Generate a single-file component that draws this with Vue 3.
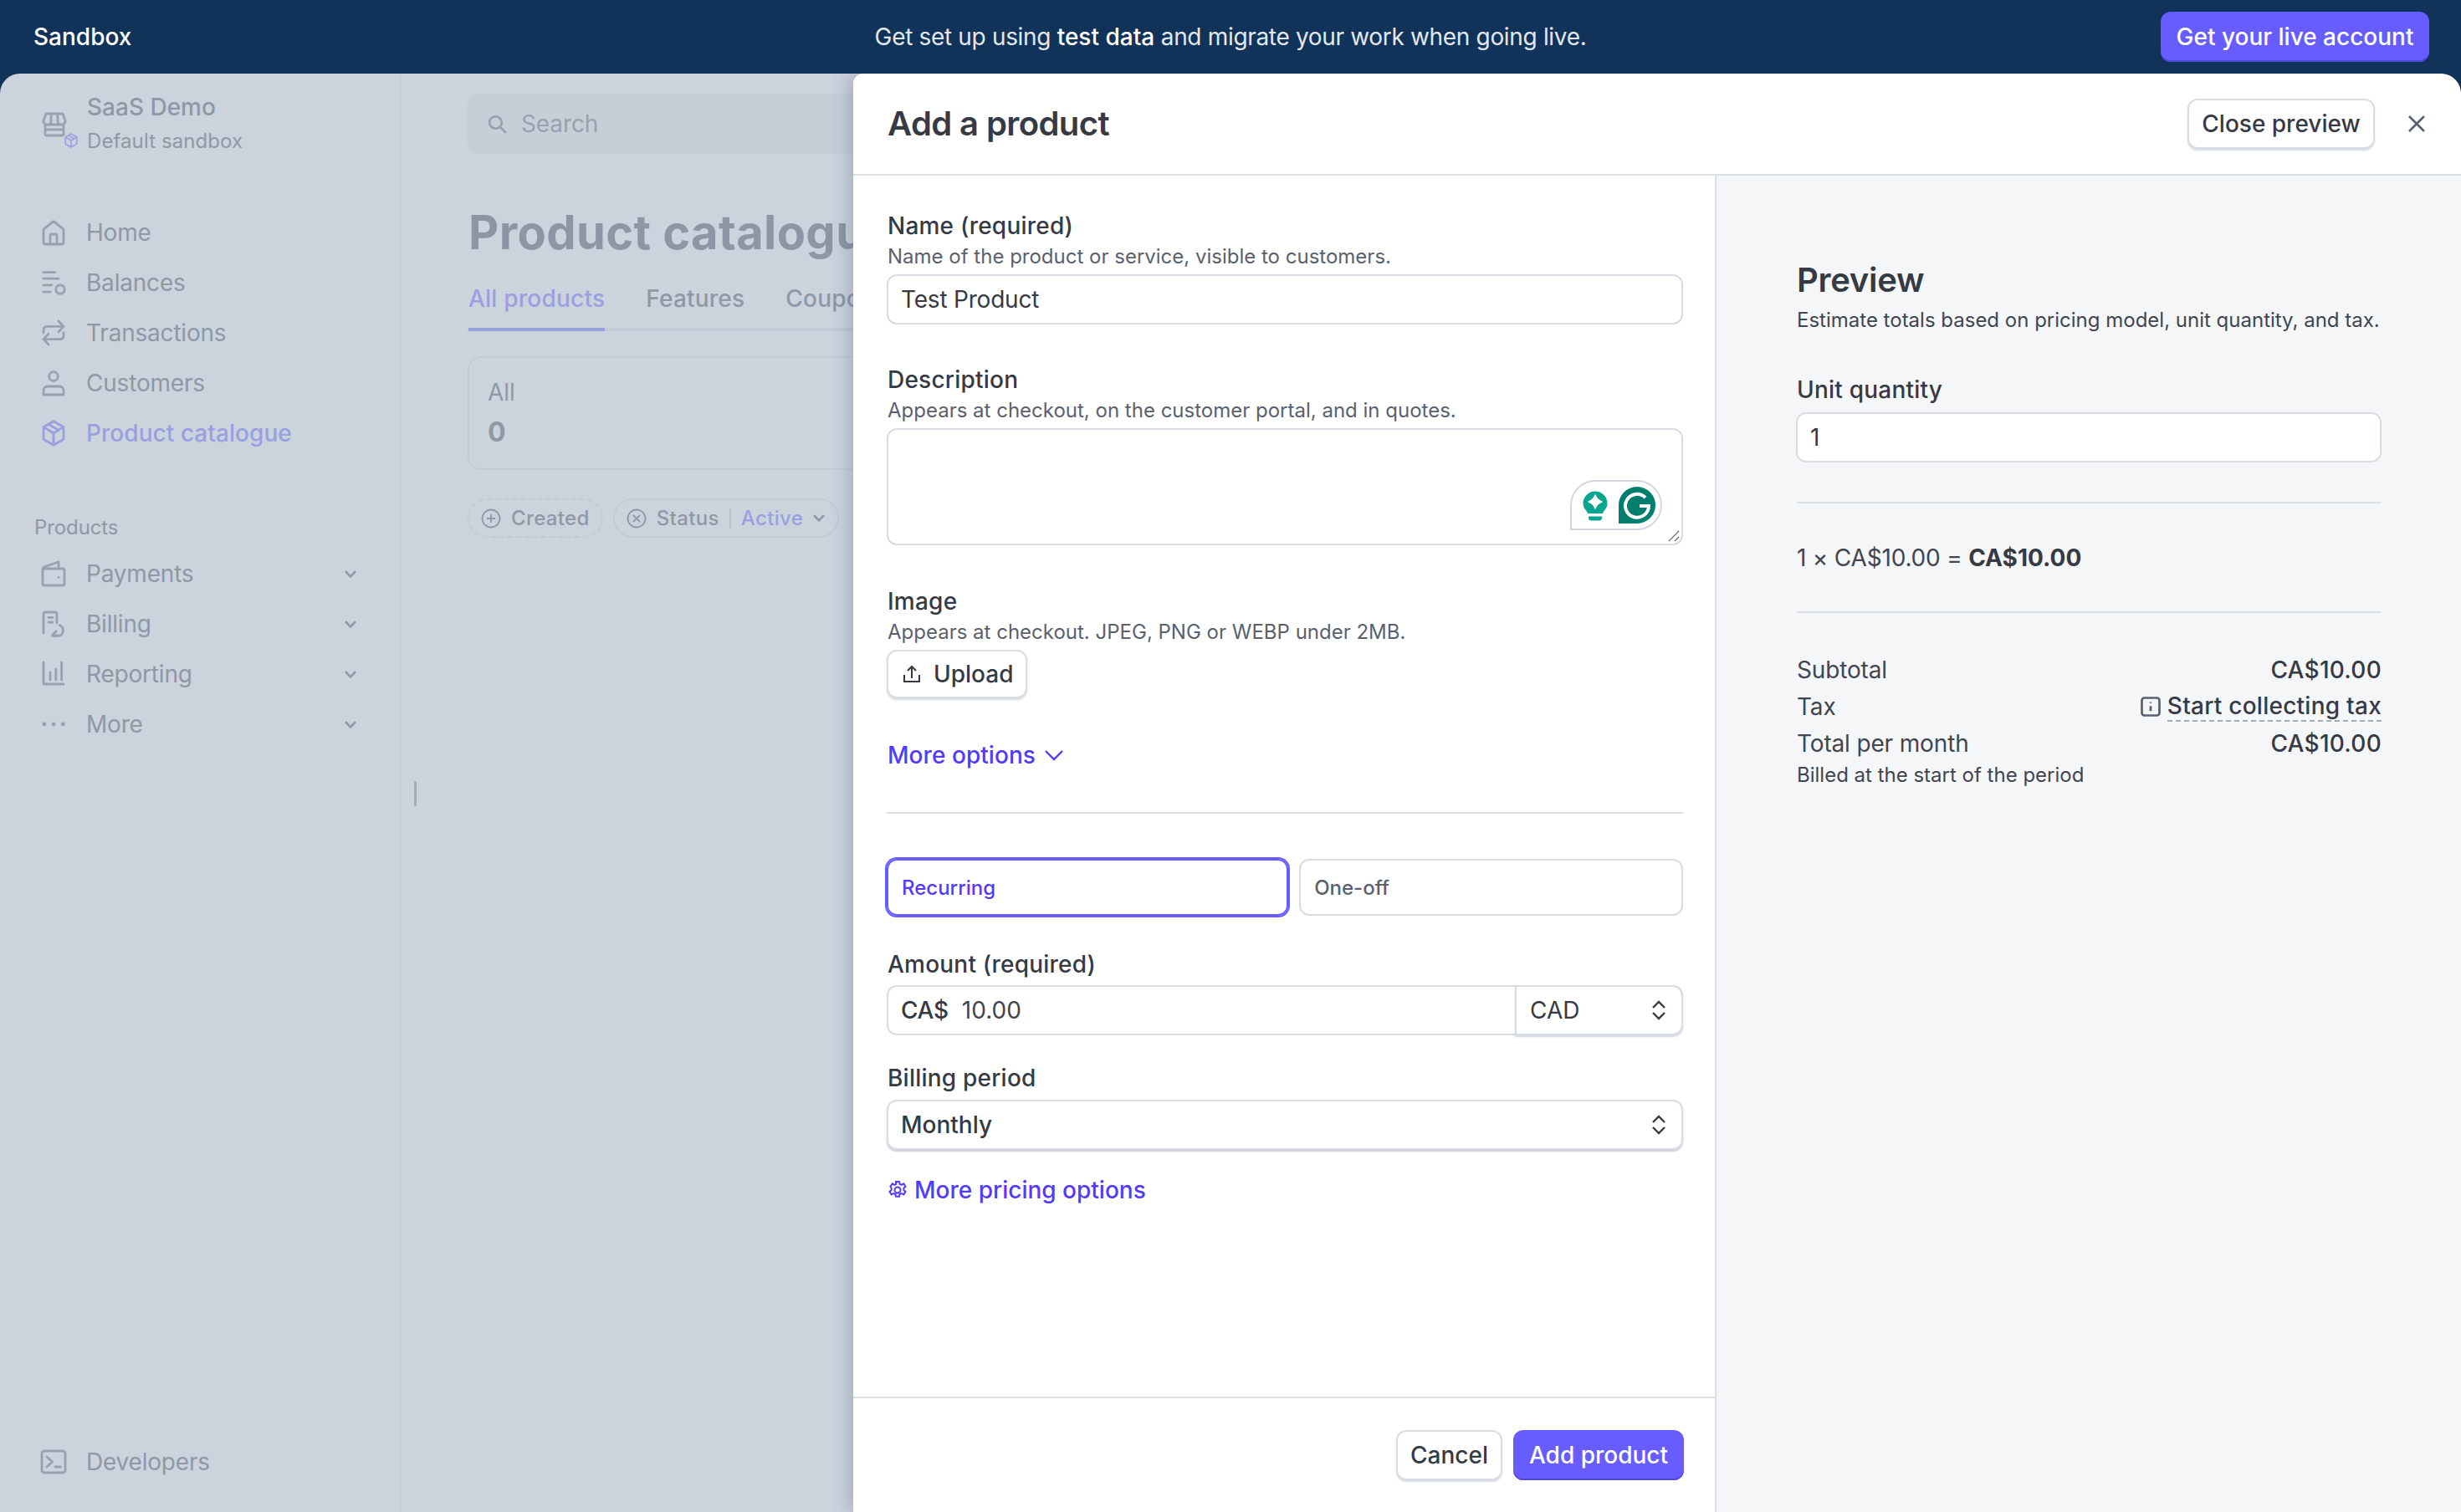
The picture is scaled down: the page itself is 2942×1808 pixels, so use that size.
<script setup>
const icons = {
  home: 'M2 14V6.800c0-.5.2-.9.6-1.200L8 1.300l5.400 4.300c.4.3.6.7.6 1.200V14a1 1 0 0 1-1 1H3a1 1 0 0 1-1-1z M6 15v-5a1 1 0 0 1 1-1h2a1 1 0 0 1 1 1v5',
  balances: 'M2 1.800h7 M2 5.600h9 M2 9.400h5 M2 13.600h4 M14.600 12a2.600 2.600 0 1 1-5.200 0 2.600 2.600 0 0 1 5.200 0z',
  transactions: 'M2 8V6.200a2 2 0 0 1 2-2h10 M11 1l3 3.200-3 3.200 M14 8v1.800a2 2 0 0 1-2 2H2 M5 8.600l-3 3.200 3 3.200',
  customers: 'M10.700 4a2.700 2.700 0 1 1-5.400 0 2.700 2.700 0 0 1 5.400 0z M2 15v-2.500A2.500 2.500 0 0 1 4.500 10h7a2.500 2.500 0 0 1 2.500 2.500V15z',
  cube: 'M8 .9l6 3.400v7.400L8 15.100l-6-3.400V4.300z M2 4.300L8 8l6-3.700 M8 8v7 M5 2.600l6 3.600',
  wallet: 'M1.500 5.500V14a1 1 0 0 0 1 1h11a1 1 0 0 0 1-1V6a1 1 0 0 0-1-1h-12z M1.500 5.200c0-.6.3-1 .8-1.200L11 1v4 M11 10.300h.1',
  billing: 'M2 13.500V2a1 1 0 0 1 1-1h6a1 1 0 0 1 1 1v5.500 M5 4.200h2.500 M5 7h2.500 M11.600 8.800A3.400 3.400 0 0 1 11.800 15H7.500 M9.600 12.400L7.200 15l2.400 1',
  reporting: 'M2 1v12.200a.8.8 0 0 0 .8.8H14 M6 7v4.500 M9.400 5v6.500 M12.800 1v10.500',
  more: 'M2.400 8h.1 M8 8h.1 M13.600 8h.1',
  dev: 'M2.500 1.500h11a1.500 1.500 0 0 1 1.500 1.500v10a1.500 1.500 0 0 1-1.500 1.500h-11A1.500 1.500 0 0 1 1 13V3a1.500 1.500 0 0 1 1.500-1.500z M4 5l3.200 3L4 11 M9 11h3.200',
  store: 'M3 1.500h10l1.500 4.200a2 2 0 0 1-2 2.300H3.500a2 2 0 0 1-2-2.300z M6.200 1.500L5.800 7.800 M9.800 1.500l.4 6.300 M2.500 8v5.500a1 1 0 0 0 1 1h9a1 1 0 0 0 1-1V8 M2.500 11h11',
}
const primaryNav = [
  { label: 'Home', icon: 'home' },
  { label: 'Balances', icon: 'balances' },
  { label: 'Transactions', icon: 'transactions' },
  { label: 'Customers', icon: 'customers' },
  { label: 'Product catalogue', icon: 'cube', active: true },
]
const productNav = [
  { label: 'Payments', icon: 'wallet' },
  { label: 'Billing', icon: 'billing' },
  { label: 'Reporting', icon: 'reporting' },
  { label: 'More', icon: 'more' },
]
</script>

<template>
  <div class="page">
    <header class="topbar">
      <span class="sandbox">Sandbox</span>
      <span class="notice">Get set up using <b>test data</b> and migrate your work when going live.</span>
      <button class="live">Get your live account</button>
    </header>

    <div class="shell">
      <aside class="sidebar">
        <div class="account">
          <span class="store">
            <svg class="nav-icon" viewBox="0 0 16 16"><path :d="icons.store" /></svg>
            <svg class="mini" viewBox="0 0 16 16"><path :d="icons.cube" /></svg>
          </span>
          <div>
            <div class="acct-name">SaaS Demo</div>
            <div class="acct-sub">Default sandbox</div>
          </div>
        </div>
        <nav class="nav nav-main">
          <a v-for="item in primaryNav" :key="item.label" class="nav-item" :class="{ active: item.active }">
            <svg class="nav-icon" viewBox="0 0 16 16"><path :d="icons[item.icon]" /></svg>
            <span>{{ item.label }}</span>
          </a>
        </nav>
        <div class="nav-title">Products</div>
        <nav class="nav">
          <a v-for="item in productNav" :key="item.label" class="nav-item">
            <svg class="nav-icon" :class="{ dots: item.icon === 'more' }" viewBox="0 0 16 16"><path :d="icons[item.icon]" /></svg>
            <span>{{ item.label }}</span>
            <svg class="chev" viewBox="0 0 12 8"><path d="M1.500 1.500L6 6.200l4.500-4.700" /></svg>
          </a>
        </nav>
        <a class="nav-item dev">
          <svg class="nav-icon" viewBox="0 0 16 16"><path :d="icons.dev" /></svg>
          <span>Developers</span>
        </a>
        <i class="handle"></i>
      </aside>

      <main class="main">
        <div class="search">
          <svg viewBox="0 0 24 24"><path d="M17 10a7 7 0 1 1-14 0 7 7 0 0 1 14 0z M15 15l7 7" /></svg>
          <span>Search</span>
        </div>
        <h1>Product catalogue</h1>
        <div class="tabs">
          <span class="tab on">All products</span>
          <span class="tab">Features</span>
          <span class="tab">Coupons</span>
        </div>
        <div class="stat">
          <div class="stat-label">All</div>
          <div class="stat-value">0</div>
        </div>
        <div class="chips">
          <span class="chip dashed">
            <svg viewBox="0 0 24 24"><path d="M12 1.500a10.500 10.500 0 1 1 0 21 10.500 10.500 0 0 1 0-21z M12 7v10 M7 12h10" /></svg>
            Created
          </span>
          <span class="chip">
            <svg viewBox="0 0 24 24"><path d="M12 1.500a10.500 10.500 0 1 1 0 21 10.500 10.500 0 0 1 0-21z M8 8l8 8 M16 8l-8 8" /></svg>
            Status
            <i class="chip-sep"></i>
            <em>Active</em>
            <svg class="chip-chev" viewBox="0 0 12 8"><path d="M1.500 1.500L6 6.200l4.500-4.700" /></svg>
          </span>
        </div>
      </main>

      <section class="drawer">
        <div class="drawer-head">
          <h2>Add a product</h2>
          <button class="btn close-preview">Close preview</button>
          <svg class="x" viewBox="0 0 24 24"><path d="M3 3l18 18 M21 3L3 21" /></svg>
        </div>
        <div class="drawer-body">
          <div class="form-col">
            <div class="form">
              <div class="label">Name (required)</div>
              <div class="hint">Name of the product or service, visible to customers.</div>
              <div class="input plain">Test Product</div>

              <div class="label gap47">Description</div>
              <div class="hint">Appears at checkout, on the customer portal, and in quotes.</div>
              <div class="input textarea">
                <div class="grammarly">
                  <svg class="bulb" viewBox="0 0 30 36">
                    <path d="M15 .5a14.500 14.500 0 0 1 14.500 14.500c0 4-1.800 6.500-4 9-1 1.200-1.500 2.200-1.500 3H6c0-.8-.5-1.800-1.500-3-2.200-2.500-4-5-4-9A14.500 14.500 0 0 1 15 .5z" fill="#0aa58e" />
                    <path d="M15 5c1.500 4.500 3.500 6.500 8 8-4.500 1.500-6.500 3.500-8 8-1.500-4.500-3.500-6.500-8-8 4.500-1.500 6.500-3.500 8-8z" fill="#fff" stroke="#fff" stroke-width="1.500" stroke-linejoin="round" />
                    <path d="M7 30.500h16v1.500a3.500 3.500 0 0 1-3.500 3.500h-9A3.500 3.500 0 0 1 7 32z" fill="#0aa58e" />
                  </svg>
                  <svg class="gmark" viewBox="0 0 44 44">
                    <path d="M22 0a22 22 0 0 1 0 44H0V22A22 22 0 0 1 22 0z" fill="#027e6f" />
                    <path d="M32 13a14 14 0 1 0 4 10H25" fill="none" stroke="#fff" stroke-width="4" />
                  </svg>
                </div>
                <svg class="grip" viewBox="0 0 16 16"><path d="M1 15L15 1 M9 15l6-6" /></svg>
              </div>

              <div class="label gap48">Image</div>
              <div class="hint">Appears at checkout. JPEG, PNG or WEBP under 2MB.</div>
              <button class="btn upload">
                <svg viewBox="0 0 24 24"><path d="M12 17V3 M7 8l5-5 5 5 M3 13v8h18v-8" /></svg>
                Upload
              </button>

              <a class="link more-options">More options
                <svg viewBox="0 0 24 14"><path d="M2 2l10 10L22 2" /></svg>
              </a>

              <hr class="rule" />

              <div class="segments">
                <div class="segment selected">Recurring</div>
                <div class="segment">One-off</div>
              </div>

              <div class="label amount-label">Amount (required)</div>
              <div class="input amount">
                <span class="currency-sign">CA$</span>
                <span class="amount-value">10.00</span>
                <span class="currency">
                  CAD
                  <svg class="sort" viewBox="0 0 18 24"><path d="M2 9l7-7 7 7 M2 15l7 7 7-7" /></svg>
                </span>
              </div>

              <div class="label period-label">Billing period</div>
              <div class="input select">
                Monthly
                <svg class="sort" viewBox="0 0 18 24"><path d="M2 9l7-7 7 7 M2 15l7 7 7-7" /></svg>
              </div>

              <a class="link more-pricing">
                <svg viewBox="0 0 24 24"><path d="M10 2h4l.6 2.800 2.200 1 2.500-1.400 2.200 3.400-2.100 1.900v2.400l2.100 1.900-2.200 3.400-2.500-1.400-2.200 1-.6 2.800h-4l-.6-2.800-2.200-1-2.500 1.400-2.200-3.400 2.100-1.900V9.700L3.500 7.800l2.200-3.400 2.500 1.400 2.200-1z M15.500 12a3.500 3.500 0 1 1-7 0 3.500 3.500 0 0 1 7 0z" /></svg>
                More pricing options
              </a>
            </div>
            <div class="form-foot">
              <button class="btn cancel">Cancel</button>
              <button class="btn-primary">Add product</button>
            </div>
          </div>

          <aside class="preview">
            <h3>Preview</h3>
            <div class="preview-sub">Estimate totals based on pricing model, unit quantity, and tax.</div>
            <div class="label unit-label">Unit quantity</div>
            <div class="input unit">1</div>
            <hr class="rule r1" />
            <div class="calc">1 × CA$10.00 = <b>CA$10.00</b></div>
            <hr class="rule r2" />
            <div class="row first"><span>Subtotal</span><b>CA$10.00</b></div>
            <div class="row">
              <span>Tax</span>
              <b class="tax-link">
                <svg viewBox="0 0 16 16"><path d="M3 1h10a2 2 0 0 1 2 2v10a2 2 0 0 1-2 2H3a2 2 0 0 1-2-2V3a2 2 0 0 1 2-2z M8 4.400v.8 M8 7.500v4" /></svg>
                <u>Start collecting tax</u>
              </b>
            </div>
            <div class="row"><span>Total per month</span><b>CA$10.00</b></div>
            <div class="billed">Billed at the start of the period</div>
          </aside>
        </div>
      </section>
    </div>
  </div>
</template>

<style>
html, body { margin: 0; background: #11335a; }
</style>

<style scoped>
* { box-sizing: border-box; }
.page {
  width: 2942px; height: 1808px; overflow: hidden; display: flex; flex-direction: column;
  background: #11335a; color: #353a44;
  font-family: Inter, "Noto Sans", sans-serif; font-size: 28px;
}
svg { fill: none; stroke: currentColor; display: block; flex: none; }
button { font: inherit; }

.topbar { height: 88px; flex: none; display: flex; align-items: center; position: relative; padding: 0 38px 0 40px; color: #fff; }
.sandbox { font-weight: 500; }
.notice { position: absolute; left: 0; right: 0; text-align: center; color: #e3e8ee; letter-spacing: -.33px; }
.notice b { font-weight: 500; color: #fff; letter-spacing: 0; }
.live { position: relative; margin-left: auto; height: 60px; width: 321px; border: 0; border-radius: 12px; background: #675dff; color: #fff; font-weight: 500; box-shadow: inset 0 -2px 0 #4f48d6; }

.shell { flex: 1; min-height: 0; display: flex; position: relative; background: #cbd3dd; border-radius: 24px 24px 0 0; overflow: hidden; }

.sidebar { width: 480px; flex: none; display: flex; flex-direction: column; padding: 20px 0 30px; border-right: 2px solid #c6ced9; position: relative; color: #8f98a6; }
.account { display: flex; align-items: center; gap: 23px; padding-left: 49px; height: 81px; }
.store { position: relative; display: block; }
.mini { position: absolute; width: 18px; height: 18px; left: 27px; top: 26px; color: #9a9fe0; stroke-width: 1.400; }
.acct-name { font-weight: 500; line-height: 40px; }
.acct-sub { font-size: 24px; line-height: 41px; letter-spacing: .08px; }
.nav { display: flex; flex-direction: column; }
.nav-main { margin-top: 59px; }
.nav-item { height: 60px; flex: none; display: flex; align-items: center; gap: 23px; padding-left: 48px; padding-right: 51px; letter-spacing: -.2px; }
.nav-item.active { color: #9a9fe0; font-weight: 500; letter-spacing: .05px; }
.nav-icon { width: 32px; height: 32px; stroke: currentColor; stroke-width: 1.400; stroke-linecap: round; stroke-linejoin: round; color: #98a1af; }
.active .nav-icon { color: #9a9fe0; }
.nav-icon.dots { stroke-width: 2.400; }
.chev { width: 16px; height: 11px; margin-left: auto; stroke-width: 2; }
.nav-title { margin: 65px 0 7px 41px; font-size: 24px; line-height: 36px; letter-spacing: -.1px; }
.dev { margin-top: auto; }
.handle { position: absolute; left: 495px; top: 846px; width: 3px; height: 30px; background: #a3acb9; border-radius: 2px; z-index: 1; }

.main { flex: 1; min-width: 0; padding: 24px 0 0 79px; color: #8f98a6; white-space: nowrap; }
.search { width: 100%; height: 72px; background: #c6ced8; border-radius: 12px; display: flex; align-items: center; gap: 16px; padding-left: 23px; color: #98a1af; letter-spacing: -.1px; }
.search svg { width: 25px; height: 25px; stroke-width: 2.600; }
h1 { margin: 60px 0 0; font-size: 56px; line-height: 68px; font-weight: 700; color: #8d96a5; letter-spacing: .4px; padding-left: 1px; }
.tabs { margin-top: 25px; display: flex; gap: 49px; border-bottom: 4px solid #c2cad6; height: 59px; padding-left: 1px; }
.tab { line-height: 40px; height: 59px; font-weight: 500; letter-spacing: .22px; }
.tab.on { color: #9a9fe0; border-bottom: 4px solid #9a9fe0; }
.stat { margin-top: 30px; width: 600px; height: 136px; border: 2px solid #c2cad6; border-radius: 16px; padding: 23px 22px; }
.stat-label { line-height: 36px; }
.stat-value { margin-top: 8px; line-height: 44px; font-weight: 700; font-size: 32px; }
.chips { margin-top: 34px; display: flex; gap: 12px; font-size: 24px; font-weight: 500; letter-spacing: .35px; }
.chip { height: 47px; border: 2px solid #c2cad6; border-radius: 24px; padding: 0 14px; display: flex; align-items: center; gap: 12px; }
.chip.dashed { border-style: dashed; }
.chip > svg { width: 24px; height: 24px; stroke-width: 1.800; }
.chip .chip-chev { width: 16px; height: 11px; stroke-width: 2; margin-left: -1px; }
.chip-sep { width: 2px; height: 24px; background: #b9c1cd; }
.chip em { font-style: normal; color: #9a9fe0; }

.drawer { position: absolute; left: 1020px; right: 0; top: 0; bottom: 0; background: #fff; border-radius: 12px 24px 0 0; display: flex; flex-direction: column; box-shadow: -6px 0 22px rgba(70, 82, 110, .28); }
.drawer-head { height: 122px; flex: none; border-bottom: 2px solid #dbdfe6; display: flex; align-items: center; padding: 0 41px; }
h2 { margin: 0; font-size: 40px; font-weight: 600; line-height: 50px; letter-spacing: -.6px; }
.x { width: 24px; height: 24px; margin-left: 38px; stroke: #596171; stroke-width: 2.600; }
.btn { background: #fff; border: 2px solid #d8dee4; border-radius: 12px; color: #353a44; font-weight: 500; box-shadow: 0 2px 2px rgba(80, 90, 110, .22); padding: 0; }
.close-preview { margin-left: auto; width: 224px; height: 60px; }

.drawer-body { flex: 1; min-height: 0; display: flex; }
.form-col { width: 1032px; flex: none; display: flex; flex-direction: column; border-right: 2px solid #dbdfe6; }
.form { flex: 1; padding: 41px 38px 0 40px; }
.label { font-weight: 500; line-height: 38px; padding-left: 1px; letter-spacing: .22px; }
.hint { font-size: 24px; line-height: 36px; color: #596171; padding-left: 1px; }
.gap47 { margin-top: 47px; }
.gap48 { margin-top: 48px; }
.input { height: 60px; margin-top: 3px; border: 2px solid #d8dde5; border-radius: 12px; display: flex; align-items: center; padding: 0 15px; background: #fff; position: relative; }
.plain, .unit { letter-spacing: -.2px; }
.textarea { height: 140px; }
.grammarly { position: absolute; left: 815px; top: 60px; width: 110px; height: 60px; border: 2px solid #d3d7e0; border-radius: 30px 30px 30px 0; }
.bulb { position: absolute; left: 13px; top: 11px; width: 30px; height: 36px; stroke: none; }
.gmark { position: absolute; left: 56px; top: 6px; width: 44px; height: 44px; stroke: none; }
.grip { position: absolute; right: 2px; bottom: 2px; width: 14px; height: 14px; stroke: #596171; stroke-width: 1.500; }
.upload { display: flex; align-items: center; gap: 14px; width: 168px; height: 58px; margin-top: 3px; padding-left: 16px; }
.upload svg { width: 24px; height: 24px; stroke-width: 2; }
.link { color: #533afd; font-weight: 500; line-height: 40px; display: flex; align-items: center; padding-left: 1px; }
.more-options { margin-top: 48px; gap: 10px; letter-spacing: .05px; }
.more-options svg { width: 24px; height: 14px; stroke-width: 2.400; }
.rule { border: 0; height: 2px; background: #dbdfe6; margin: 48px 0 0; }
.segments { margin-top: 54px; display: flex; gap: 13px; }
.segment { height: 68px; border: 2px solid #d8dde5; border-radius: 12px; display: flex; align-items: center; padding: 0 16px; font-size: 24px; font-weight: 500; color: #596171; flex: 458; }
.segment.selected { flex: 481; color: #533afd; border-color: #675dff; box-shadow: 0 0 0 2px #675dff; }
.amount-label { margin-top: 39px; }
.amount { margin-top: 6px; padding-right: 0; overflow: visible; }
.currency-sign { font-weight: 500; letter-spacing: -.3px; }
.amount-value { margin-left: 16px; color: #414552; }
.currency { position: absolute; right: -2px; top: -2px; width: 201px; height: 60px; border: 2px solid #d8dde5; border-radius: 0 12px 12px 0; box-shadow: 0 2px 2px rgba(80, 90, 110, .25); display: flex; align-items: center; padding-left: 16px; }
.sort { width: 18px; height: 24px; margin-left: auto; margin-right: 18px; stroke: #353a44; stroke-width: 2.400; }
.period-label { margin-top: 32px; }
.select { margin-top: 7px; font-weight: 500; box-shadow: 0 2px 2px rgba(80, 90, 110, .3); padding-right: 0; }
.more-pricing { margin-top: 28px; gap: 8px; }
.more-pricing svg { width: 24px; height: 24px; stroke-width: 2; }
.form-foot { height: 138px; flex: none; border-top: 2px solid #dbdfe6; display: flex; justify-content: flex-end; align-items: flex-start; gap: 13px; padding: 38px 37px 0 0; }
.cancel { width: 127px; height: 60px; }
.btn-primary { width: 204px; height: 60px; border: 0; border-radius: 12px; background: #675dff; color: #fff; font-weight: 500; box-shadow: inset 0 -2px 0 #4f48d6; }

.preview { flex: 1; background: #f5f6f8; padding: 101px 95px 0 96px; }
h3 { margin: 0; font-size: 40px; line-height: 48px; font-weight: 600; letter-spacing: -.3px; }
.preview-sub { margin-top: 6px; font-size: 24px; line-height: 36px; color: #414552; white-space: nowrap; }
.unit-label { margin-top: 46px; padding-left: 0; }
.unit { margin-top: 8px; margin-left: -1px; }
.r1 { margin-top: 47px; }
.calc { margin-top: 47px; line-height: 36px; color: #414552; letter-spacing: -.2px; }
.calc b { font-weight: 700; color: #353a44; letter-spacing: 0; }
.r2 { margin-top: 46px; }
.row { display: flex; justify-content: space-between; line-height: 44px; color: #414552; height: 44px; letter-spacing: -.15px; }
.row.first { margin-top: 46px; }
.row b { font-weight: 500; color: #353a44; letter-spacing: .25px; }
.tax-link { display: flex; align-items: center; gap: 8px; }
.tax-link svg { width: 24px; height: 24px; stroke: #596171; stroke-width: 1.800; }
.tax-link u { text-decoration: none; border-bottom: 2px dashed #a3acb9; line-height: 34px; }
.billed { font-size: 24px; line-height: 36px; color: #414552; margin-top: -2px; }
</style>
